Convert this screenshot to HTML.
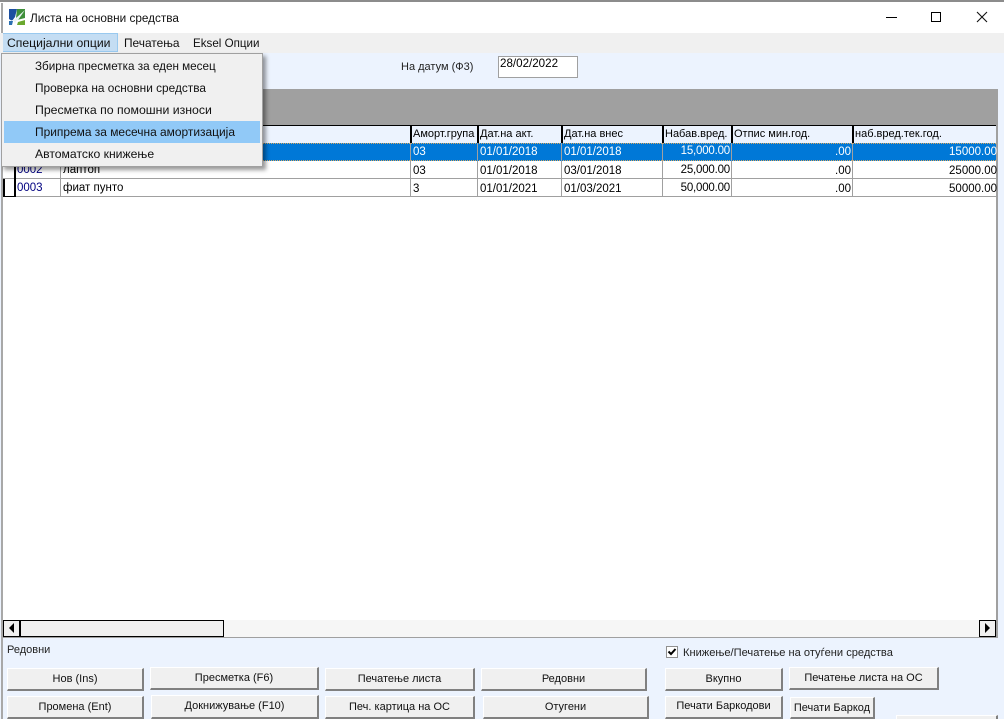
<!DOCTYPE html>
<html><head><meta charset="utf-8"><style>
html,body{margin:0;padding:0;width:1004px;height:719px;overflow:hidden;background:#ecf3fe}
body{position:relative;font-family:"Liberation Sans",sans-serif;font-size:11px;color:#000}
div{position:absolute;box-sizing:border-box}
.t{white-space:nowrap;line-height:14px}
.m{font-size:11.8px;white-space:nowrap;line-height:16px;color:#111}
.c{white-space:nowrap;line-height:14px;height:14px;overflow:visible;font-size:11.5px}
.h{font-size:11px}
.v{width:1px;background:#a0a0a0;top:143px;height:54px}
.hv{width:2px;background:#000;top:126px;height:17px}
.r{text-align:right}
.n{font-size:11.5px;letter-spacing:-.2px}
.b{background:#f0f0f0;border-top:1px solid #fff;border-left:1px solid #fff;border-right:2px solid #808080;border-bottom:2px solid #808080;text-align:center;font-size:11px;line-height:21px;white-space:nowrap;color:#111}
.w{color:#fff}
.blue{color:#000080}
</style></head><body>
<div style="left:0;top:0;width:1004px;height:33px;background:#fff"></div>
<div style="left:0;top:0;width:1004px;height:2px;background:#8c8c8c"></div>
<svg style="position:absolute;left:9px;top:9px" width="17" height="17" viewBox="0 0 17 17">
<rect width="17" height="17" fill="#fff"/>
<path d="M0 0H8L6 8 3 12 0 10Z" fill="#1c4fa0"/>
<path d="M8 0H16V9L8 11 7 9Z" fill="#3f8f3a"/>
<path d="M0 12 4 12 3 16H0Z" fill="#2a6fb0"/>
<path d="M9 13 16 11V16H8Z" fill="#6aa82e"/>
<path d="M16 1 7 9 5 11 1 11 5 12 6 15 7 12 9 11Z" fill="#eaf3f5"/>
</svg>
<div class="m" style="left:30px;top:11px;font-size:11.75px">Листа на основни средства</div>
<div style="left:886px;top:17px;width:11px;height:1px;background:#000"></div>
<div style="left:931px;top:12px;width:10px;height:10px;border:1px solid #000"></div>
<svg style="position:absolute;left:976px;top:11px" width="12" height="12" viewBox="0 0 12 12"><path d="M1 1 11 11M11 1 1 11" stroke="#111" stroke-width="1.1" fill="none"/></svg>

<div style="left:0;top:33px;width:1004px;height:20px;background:#f0f0f0"></div>
<div style="left:1px;top:33px;width:117px;height:19px;background:#c4ddf3;border:1px solid #99c9ef"></div>
<div class="m" style="left:7px;top:35px;font-size:12.2px">Специјални опции</div>
<div class="m" style="left:124px;top:35px;font-size:11.9px">Печатења</div>
<div class="m" style="left:193px;top:36px;font-size:11.6px">Eksel Опции</div>

<div style="left:1px;top:3px;width:2px;height:716px;background:#a8a8a8"></div>
<div style="left:1px;top:33px;width:2px;height:20px;background:#f0f0f0"></div>

<div class="t" style="left:401px;top:60px;color:#222">На датум (Ф3)</div>
<div style="left:498px;top:56px;width:80px;height:22px;background:#fff;border:1px solid #a0a0a0"></div>
<div class="t" style="left:500px;top:57px;font-size:11.6px">28/02/2022</div>

<div style="left:3px;top:89px;width:994px;height:36px;background:#a0a0a0"></div>
<div style="left:3px;top:125px;width:994px;height:18px;background:#ecf3fe;border-top:1px solid #000"></div>
<div style="left:3px;top:143px;width:994px;height:477px;background:#fff"></div>
<div style="left:996px;top:89px;width:2px;height:549px;background:#a0a0a0"></div>

<div style="left:3px;top:143px;width:993px;height:18px;background:#0078d7;border-top:1px dotted #d9a860;border-bottom:1px dotted #d9a860"></div>
<div style="left:3px;top:178px;width:993px;height:1px;background:#a0a0a0"></div>
<div style="left:3px;top:196px;width:993px;height:1px;background:#a0a0a0"></div>

<div class="hv" style="left:410px"></div><div class="hv" style="left:477px"></div><div class="hv" style="left:561px"></div><div class="hv" style="left:662px"></div><div class="hv" style="left:731px"></div><div class="hv" style="left:852px"></div>
<div class="v" style="left:60px"></div><div class="v" style="left:410px"></div><div class="v" style="left:477px"></div><div class="v" style="left:561px"></div><div class="v" style="left:662px"></div><div class="v" style="left:731px"></div><div class="v" style="left:852px"></div>
<div style="left:3px;top:179px;width:13px;height:18px;border:1px solid #000;border-width:0 2px 1px 2px"></div>
<div style="left:14px;top:161px;width:2px;height:18px;background:#000"></div>

<div class="c h" style="left:413px;top:127px">Аморт.група</div>
<div class="c h" style="left:480px;top:127px">Дат.на акт.</div>
<div class="c h" style="left:564px;top:127px">Дат.на внес</div>
<div class="c h" style="left:665px;top:127px">Набав.вред.</div>
<div class="c h" style="left:734px;top:127px">Отпис мин.год.</div>
<div class="c h" style="left:855px;top:127px">наб.вред.тек.год.</div>

<div class="c w" style="left:413px;top:145px">03</div>
<div class="c w" style="left:480px;top:145px">01/01/2018</div>
<div class="c w" style="left:564px;top:145px">01/01/2018</div>
<div class="c w r n" style="left:662px;width:68px;top:144px">15,000.00</div>
<div class="c w r" style="left:732px;width:119px;top:145px">.00</div>
<div class="c w r" style="left:853px;width:144px;top:145px">15000.00</div>

<div class="c blue" style="left:17px;top:163px">0002</div>
<div class="c" style="left:63px;top:163px">лаптоп</div>
<div class="c" style="left:413px;top:164px">03</div>
<div class="c" style="left:480px;top:164px">01/01/2018</div>
<div class="c" style="left:564px;top:164px">03/01/2018</div>
<div class="c r n" style="left:662px;width:68px;top:163px">25,000.00</div>
<div class="c r" style="left:732px;width:119px;top:164px">.00</div>
<div class="c r" style="left:853px;width:144px;top:164px">25000.00</div>

<div class="c blue" style="left:17px;top:181px">0003</div>
<div class="c" style="left:63px;top:181px">фиат пунто</div>
<div class="c" style="left:413px;top:182px">3</div>
<div class="c" style="left:480px;top:182px">01/01/2021</div>
<div class="c" style="left:564px;top:182px">01/03/2021</div>
<div class="c r n" style="left:662px;width:68px;top:181px">50,000.00</div>
<div class="c r" style="left:732px;width:119px;top:182px">.00</div>
<div class="c r" style="left:853px;width:144px;top:182px">50000.00</div>

<div style="left:1px;top:53px;width:262px;height:114px;background:#f0f0f0;border:1px solid #a0a0a0;box-shadow:3px 3px 4px rgba(0,0,0,.4)"></div>
<div style="left:4px;top:121px;width:256px;height:22px;background:#91c9f7"></div>
<div class="m" style="left:35px;top:59px;font-size:11.7px">Збирна пресметка за еден месец</div>
<div class="m" style="left:35px;top:80px;font-size:11.85px">Проверка на основни средства</div>
<div class="m" style="left:35px;top:102px;font-size:12.3px">Пресметка по помошни износи</div>
<div class="m" style="left:35px;top:124px;font-size:11.95px">Припрема за месечна амортизација</div>
<div class="m" style="left:35px;top:146px;font-size:12.2px">Автоматско книжење</div>

<div style="left:3px;top:620px;width:993px;height:17px;background:#f6f6f6"></div>
<div style="left:3px;top:637px;width:995px;height:1px;background:#a0a0a0"></div>
<div style="left:3px;top:620px;width:221px;height:17px;background:#f0f0f0;border:1px solid #000"></div>
<div style="left:19px;top:620px;width:2px;height:17px;background:#000"></div>
<svg style="position:absolute;left:9px;top:623px" width="6" height="11"><path d="M5 0V10L0 5Z" fill="#000"/></svg>
<div style="left:979px;top:620px;width:17px;height:17px;background:#f0f0f0;border:1px solid #000"></div>
<svg style="position:absolute;left:985px;top:623px" width="6" height="11"><path d="M0 0V10L5 5Z" fill="#000"/></svg>

<div class="t" style="left:7px;top:643px;color:#222">Редовни</div>
<div style="left:666px;top:646px;width:12px;height:12px;background:#fff;border:1px solid #909090"></div>
<svg style="position:absolute;left:667px;top:647px" width="10" height="10"><path d="M1.5 4.5 4 7 8.5 2" stroke="#000" stroke-width="2" fill="none"/></svg>
<div class="t" style="left:683px;top:646px;color:#222;font-size:11.1px">Книжење/Печатење на отуѓени средства</div>

<div class="b" style="left:7px;top:668px;width:137px;height:23px">Нов (Ins)</div>
<div class="b" style="left:150px;top:667px;width:169px;height:23px">Пресметка (F6)</div>
<div class="b" style="left:325px;top:668px;width:150px;height:23px">Печатење листа</div>
<div class="b" style="left:481px;top:668px;width:166px;height:23px">Редовни</div>
<div class="b" style="left:665px;top:668px;width:118px;height:23px">Вкупно</div>
<div class="b" style="left:789px;top:667px;width:150px;height:23px">Печатење листа на ОС</div>
<div class="b" style="left:7px;top:696px;width:137px;height:23px">Промена (Ent)</div>
<div class="b" style="left:151px;top:695px;width:168px;height:24px">Докнижување (F10)</div>
<div class="b" style="left:325px;top:696px;width:150px;height:23px">Печ. картица на ОС</div>
<div class="b" style="left:483px;top:696px;width:166px;height:23px">Отугени</div>
<div class="b" style="left:665px;top:696px;width:118px;height:23px;line-height:19px">Печати Баркодови</div>
<div class="b" style="left:790px;top:697px;width:85px;height:22px;line-height:20px">Печати Баркод</div>
<div class="b" style="left:896px;top:715px;width:102px;height:10px"></div>
</body></html>
